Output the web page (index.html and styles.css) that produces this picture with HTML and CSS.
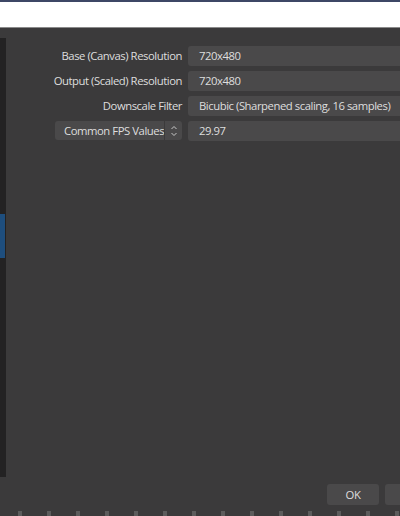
FILE: index.html
```html
<!DOCTYPE html>
<html>
<head>
<meta charset="utf-8">
<link rel="stylesheet" href="styles.css">
</head>
<body>
<div class="titlebar"></div>
<div class="window">
  <div class="main">
    <div class="sidebar">
      <div class="sidebar-selected"></div>
    </div>
    <div class="form">
      <div class="label">Base (Canvas) Resolution</div>
      <div class="field">720x480</div>
      <div class="label">Output (Scaled) Resolution</div>
      <div class="field">720x480</div>
      <div class="label">Downscale Filter</div>
      <div class="field">Bicubic (Sharpened scaling, 16 samples)</div>
      <div class="label">
        <div class="combo">
          <span class="combo-text">Common FPS Values</span>
          <span class="combo-spin">
            <svg width="8" height="14" viewBox="0 0 8 14"><path d="M1.5 5 L4 2.5 L6.5 5" fill="none" stroke="#c8c8c8" stroke-width="1"/><path d="M1.5 9 L4 11.5 L6.5 9" fill="none" stroke="#c8c8c8" stroke-width="1"/></svg>
          </span>
        </div>
      </div>
      <div class="field">29.97</div>
    </div>
  </div>
  <div class="buttons">
    <div class="btn">OK</div>
    <div class="btn btn-cut"></div>
  </div>
  <div class="bottom-strip"></div>
</div>
</body>
</html>
```
FILE: styles.css
```css
html, body {
  margin: 0;
  padding: 0;
}
body {
  width: 400px;
  height: 516px;
  overflow: hidden;
  background: #3b3a3b;
  font-family: "Open Sans", "Noto Sans", sans-serif;
  font-size: 11.3px;
  letter-spacing: -0.45px;
  color: #dedede;
}
.titlebar {
  height: 25px;
  background: #ffffff;
  border-top: 2px solid #3d4766;
  border-bottom: 1px solid #8a8a8a;
}
.window {
  display: flex;
  flex-direction: column;
  height: 488px;
}
.main {
  display: flex;
  flex: 1;
}
.sidebar {
  width: 6px;
  margin-top: 10px;
  height: 439px;
  background: #232223;
  flex-shrink: 0;
}
.sidebar-selected {
  margin-top: 176px;
  height: 44px;
  width: 5px;
  background: #1e4e7e;
}
.form {
  display: grid;
  grid-template-columns: 176px 212px;
  column-gap: 6px;
  row-gap: 5px;
  align-content: start;
  padding-top: 18px;
}
.label {
  height: 20px;
  line-height: 20px;
  display: flex;
  justify-content: flex-end;
  white-space: nowrap;
}
.field {
  height: 20px;
  line-height: 20px;
  background: #4a494a;
  border-radius: 3px 0 0 3px;
  padding-left: 11px;
  white-space: nowrap;
  overflow: hidden;
}
.combo {
  display: flex;
  width: 127px;
  height: 19px;
  background: #4a494a;
  border-radius: 3px;
}
.combo-text {
  flex: 1;
  padding-left: 9px;
  line-height: 19px;
  text-align: left;
}
.combo-spin {
  width: 18px;
  border-left: 1px solid #3b3a3b;
  display: flex;
  align-items: center;
  justify-content: center;
}
.buttons {
  display: flex;
  gap: 6px;
  padding-left: 327px;
  height: 21px;
  margin-bottom: 6px;
}
.btn {
  flex-shrink: 0;
  width: 52px;
  height: 21px;
  line-height: 21px;
  background: #4a494a;
  border-radius: 3px;
  text-align: center;
}
.btn-cut {
  width: 15px;
  border-radius: 3px 0 0 3px;
}
.bottom-strip {
  height: 5px;
  background: repeating-linear-gradient(90deg, #3b3a3b 0 18px, #5c5c5c 18px 22px, #3b3a3b 22px 29px);
}
```
